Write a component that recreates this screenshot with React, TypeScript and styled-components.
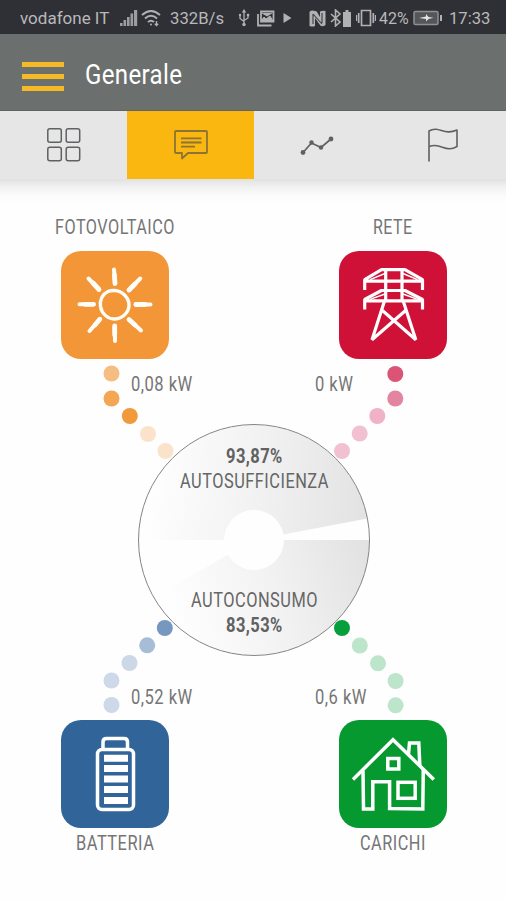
import React, { useLayoutEffect, useRef, useState } from "react";
import styled, { createGlobalStyle } from "styled-components";

const GlobalStyle = createGlobalStyle`
  * { box-sizing: border-box; }
  body { margin: 0; background: #fefefe; font-family: Roboto, "Liberation Sans", sans-serif; }
`;

const Screen = styled.div`
  width: 506px;
  height: 900px;
  display: flex;
  flex-direction: column;
  overflow: hidden;
  background: #fefefe;
`;

const FitBox = styled.span<{ $width: number; $size: number; $weight: number; $color: string; $spacing: number }>`
  display: block;
  flex: none;
  width: ${(p) => p.$width}px;
  font-size: ${(p) => p.$size}px;
  line-height: 24px;
  font-weight: ${(p) => p.$weight};
  letter-spacing: ${(p) => p.$spacing}px;
  color: ${(p) => p.$color};
  white-space: nowrap;
`;

const FitInner = styled.span`
  display: inline-block;
  vertical-align: top;
  transform-origin: 0 50%;
`;

type CondensedProps = {
  children: string;
  width: number;
  size?: number;
  weight?: number;
  color?: string;
  spacing?: number;
};

/* Condenses a line of text horizontally to the requested width. */
function Condensed({ children, width, size = 20, weight = 400, color = "#757575", spacing = 0 }: CondensedProps) {
  const ref = useRef<HTMLSpanElement>(null);
  const [scale, setScale] = useState(1);
  useLayoutEffect(() => {
    if (ref.current) setScale(width / ref.current.offsetWidth);
  }, [width, children]);
  return (
    <FitBox $width={width} $size={size} $weight={weight} $color={color} $spacing={spacing}>
      <FitInner ref={ref} style={{ transform: `scaleX(${scale})` }}>
        {children}
      </FitInner>
    </FitBox>
  );
}

const StatusBar = styled.header`
  height: 34px;
  flex: none;
  display: flex;
  align-items: center;
  padding: 2px 16px 0 20px;
  background: #2f3035;
`;

const StatusIcon = styled.svg<{ $before?: number }>`
  display: block;
  flex: none;
  margin-left: ${(p) => p.$before ?? 0}px;
  color: #b1b1b4;
`;

const Gap = styled.span<{ $w: number }>`
  flex: none;
  width: ${(p) => p.$w}px;
`;

const AppBar = styled.div`
  height: 77px;
  flex: none;
  display: flex;
  align-items: center;
  gap: 21px;
  padding: 5px 22px 0 22px;
  background: #6b706f;
  border-bottom: 1px solid #606463;
`;

const MenuButton = styled.button`
  width: 42px;
  height: 29px;
  margin-top: 3px;
  padding: 0;
  border: 0;
  background: none;
  display: flex;
  flex-direction: column;
  justify-content: space-between;
`;

const MenuLine = styled.span`
  height: 5px;
  width: 100%;
  background: #f4bb26;
`;

const Tabs = styled.nav`
  height: 68px;
  flex: none;
  display: grid;
  grid-template-columns: 127px 127px 126px 126px;
`;

const Tab = styled.button<{ $active?: boolean }>`
  border: 0;
  padding: 0;
  display: flex;
  align-items: center;
  justify-content: center;
  background: ${(p) => (p.$active ? "#f9b70f" : "#e6e6e6")};
  color: ${(p) => (p.$active ? "#8d7335" : "#5f6162")};
`;

const TabShadow = styled.div`
  height: 24px;
  flex: none;
  background: linear-gradient(#e1e1e1, #f2f2f2 35%, #fbfbfb 70%, #fefefe);
`;

const Flow = styled.main`
  position: relative;
  flex: 1;
  display: flex;
  flex-direction: column;
  padding-top: 12px;
`;

const Links = styled.svg`
  position: absolute;
  left: 0;
  top: -203px;
  pointer-events: none;
`;

const NodeRow = styled.div<{ $top?: number }>`
  display: flex;
  justify-content: space-between;
  margin-top: ${(p) => p.$top ?? 0}px;
  padding: 0 59px 0 60.5px;
`;

const Node = styled.section<{ $gap: number }>`
  width: 108px;
  display: flex;
  flex-direction: column;
  align-items: center;
  gap: ${(p) => p.$gap}px;
`;

const Tile = styled.div<{ $color: string }>`
  width: 108px;
  height: 108px;
  border-radius: 20px;
  background: ${(p) => p.$color};
`;

const Values = styled.div<{ $top: number }>`
  display: grid;
  grid-template-columns: 183.5px auto;
  padding-left: 131px;
  margin-top: ${(p) => p.$top}px;
`;

const Gauge = styled.section`
  position: relative;
  width: 232px;
  height: 232px;
  margin: 28px 0 0 138px;
  display: flex;
  flex-direction: column;
  align-items: center;
  justify-content: space-between;
  padding: 20px 0 19px;
`;

const GaugeDisc = styled.svg`
  position: absolute;
  inset: 0;
`;

const GaugeText = styled.div`
  position: relative;
  display: flex;
  flex-direction: column;
  align-items: center;
  gap: 1px;
`;

const grey = "#b9b9bb";

function StatusBarContent() {
  return (
    <StatusBar>
      <Condensed width={89} size={17} color={grey}>vodafone IT</Condensed>
      <StatusIcon $before={11} width="18" height="18" viewBox="0 0 18 18" fill="currentColor" opacity=".85">
        <path d="M0 14h2.6v3H0zM3.5 11h2.6v6H3.5zM7 8h2.6v9H7zM10.5 4.5h2.6V17h-2.6zM14 1h3.2v16H14z" />
      </StatusIcon>
      <StatusIcon $before={3} width="20" height="18" viewBox="0 0 20 18" fill="none" stroke="currentColor" strokeWidth="2">
        <path d="M1 6q9-8 18 0M4 9.5q6-5.5 12 0M7 13q3-2.6 6 0" />
        <circle cx="10" cy="15.5" r="1" fill="currentColor" stroke="none" />
        <path d="M15.5 12v4M13.8 14.7l1.7 1.8 1.7-1.8" strokeWidth="1.3" />
      </StatusIcon>
      <Gap $w={9} />
      <Condensed width={54} size={17} color={grey}>332B/s</Condensed>
      <StatusIcon $before={14} width="12" height="18" viewBox="0 0 12 18" fill="none" stroke="currentColor" strokeWidth="1.3">
        <path d="M6 3v12M2 6v3.5l4 3M10 6v3l-4 2.5" />
        <path d="M6 0l2.2 3.6H3.8z" fill="currentColor" stroke="none" />
        <circle cx="6" cy="15.5" r="1.7" fill="currentColor" stroke="none" />
        <circle cx="2" cy="6" r="1.2" fill="currentColor" stroke="none" />
        <path d="M8.8 4.8h2.4v2.4H8.8z" fill="currentColor" stroke="none" />
      </StatusIcon>
      <StatusIcon $before={7} width="18" height="17" viewBox="0 0 18 17" fill="none" stroke="currentColor" strokeWidth="1.8">
        <path d="M4 1.5h12.5v10H4zM1 4v11.5h13.5" />
        <path d="M4 11l3-4 2 2 4-3 3 5zM5 3l5 3 5-3" fill="currentColor" strokeWidth="1" />
      </StatusIcon>
      <StatusIcon $before={8} width="9" height="12" viewBox="0 0 9 12" fill="currentColor">
        <path d="M.5 1l8 5-8 5z" />
      </StatusIcon>
      <StatusIcon $before={17} width="17" height="17" viewBox="0 0 17 17">
        <path d="M3 .5q4 0 5 1.5l3 5V1.5Q14 .3 16.5 1v14q-2.5 2-5 .8L6 8v8q-2.5 1-5.5 0V2Q1 .5 3 .5z" fill="currentColor" />
        <path d="M4 4v10M4 4l9 10M13 13V3" stroke="#3b3c41" strokeWidth="1.1" fill="none" />
      </StatusIcon>
      <StatusIcon $before={4} width="12" height="18" viewBox="0 0 12 18" fill="none" stroke="currentColor" strokeWidth="1.6">
        <path d="M1 5l9 8-4.5 4V1L10 5l-9 8" />
      </StatusIcon>
      <StatusIcon $before={1} width="8" height="17" viewBox="0 0 8 17" fill="currentColor">
        <path d="M2.5 0h3v2H8v15H0V2h2.5z" />
      </StatusIcon>
      <StatusIcon $before={5} width="20" height="18" viewBox="0 0 20 18" fill="none" stroke="currentColor" strokeWidth="1.7">
        <path d="M5.5 1.5h9v15h-9zM2.7 4v10M17.3 4v10" />
        <path d="M.6 6v6M19.4 6v6" strokeWidth="1.2" />
      </StatusIcon>
      <Gap $w={3} />
      <Condensed width={30} size={17} color={grey}>42%</Condensed>
      <StatusIcon $before={4} width="30" height="16" viewBox="0 0 30 16">
        <rect x="1" y="1.5" width="24" height="13" rx="1.5" fill="#55565a" stroke="#8f9093" strokeWidth="1.5" />
        <path d="M28 5v6" stroke="currentColor" strokeWidth="2" />
        <path d="M6 8l7-1.5V4l2.5 3 5 .8-5 1.2-2.5 2.5V9z" fill="#e4e4e4" />
      </StatusIcon>
      <Gap $w={6} />
      <Condensed width={41} size={17} color={grey}>17:33</Condensed>
    </StatusBar>
  );
}

const GridIcon = () => (
  <svg width="34" height="34" viewBox="0 0 34 34" fill="none" stroke="currentColor" strokeWidth="1.5">
    <rect x=".8" y=".8" width="13.5" height="13.5" rx="2" />
    <rect x="19.2" y=".8" width="13.5" height="13.5" rx="2" />
    <rect x=".8" y="19.2" width="13.5" height="13.5" rx="2" />
    <rect x="19.2" y="19.2" width="13.5" height="13.5" rx="2" />
  </svg>
);

const ChatIcon = () => (
  <svg width="34" height="30" viewBox="0 0 34 30" fill="none" stroke="currentColor" strokeWidth="1.8" strokeLinejoin="round">
    <path d="M2 1h30q1 0 1 1v20q0 1-1 1H14l-6 5.5V23H2q-1 0-1-1V2q0-1 1-1z" />
    <path d="M7 8.3h20.5M7 12.5h20.5M7 16.7h14" />
  </svg>
);

const TrendIcon = () => (
  <svg width="34" height="21" viewBox="0 0 34 21" stroke="currentColor" fill="currentColor">
    <path d="M3 17.500L11.500 8l9.500 4.500L31 4" fill="none" strokeWidth="1.7" />
    <g stroke="none">
      <circle cx="3" cy="17.5" r="2.4" />
      <circle cx="11.5" cy="7.5" r="2.2" />
      <circle cx="21" cy="12.5" r="2.2" />
      <circle cx="31" cy="4" r="2.4" />
    </g>
  </svg>
);

const FlagIcon = () => (
  <svg width="32" height="34" viewBox="0 0 32 34" fill="none" stroke="currentColor" strokeWidth="1.6" strokeLinecap="round" strokeLinejoin="round">
    <path d="M2 33V3Q5 1 9 1.200C15 1.600 20 6.500 30 2V18.500C22 23.500 17 19 10 17.700Q6 17.200 2 18.500" />
  </svg>
);

const SunIcon = () => (
  <svg width="108" height="108" viewBox="0 0 108 108" fill="none" stroke="#fffdf8" strokeLinecap="round">
    <path d="M47 40.500C41.500 43 38.500 49 39.500 55.500S46.500 68.500 54 68 68 61.500 68 54 61 39.800 53.500 39.500Q50 39.300 47 40.500z" strokeWidth="3.4" />
    <path
      d="M53 18.500L54.200 32.500M27.500 27.500L38 38.500M79.300 27.500L68 39M18.500 53.300H32.500M74.800 53.500H89.500M38.800 68.200L28.500 80M68 68.500L80 79.500M53.700 75L54 90"
      strokeWidth="4"
    />
    <path d="M53.400 24L54 32.500M32 32L38 38.500M74 33L68 39M24 53.300H32.500M74.800 53.500H84M34 74L38.800 68.200M68 68.500L74 74M53.700 75V84" strokeWidth="4.8" />
  </svg>
);

const PylonIcon = () => (
  <svg width="108" height="108" viewBox="0 0 108 108" fill="none" stroke="#fff" strokeWidth="3.2" strokeLinejoin="bevel">
    <path d="M25.700 39V28.700L42.500 18.700H66L83.500 28.700V39M25.700 30.200H83.500M46.700 18.700V50M63 18.700V50" />
    <path d="M25.700 58.500V48.500L42.500 39.500H66L83.500 48.500V58.500M25.700 49.800H83.500" />
    <path d="M45.500 50L33 88.800L68 58.300M64.200 50L76.800 88.800L42 58.300" />
    <path d="M31 28.700L46 22.500M78.500 28.700L64 22.500M31 48.300L46 43M78.500 48.300L64 43" strokeWidth="1.4" />
  </svg>
);

const BatteryIcon = () => (
  <svg width="108" height="108" viewBox="0 0 108 108" fill="none" stroke="#fff" strokeWidth="3.5">
    <rect x="36.5" y="29.5" width="36" height="60" rx="4.5" />
    <path d="M42 28.500V22q0-3.500 3.500-3.500H63q3.500 0 3.500 3.500v6.500" />
    <path d="M43 38.300h24M43 48.500h24M43 59h24M43 69.500h24M43 80.500h24" strokeWidth="7" />
  </svg>
);

const HouseIcon = () => (
  <svg width="108" height="108" viewBox="0 0 108 108" fill="none" stroke="#fff" strokeWidth="3.5">
    <path d="M14 59.500L54 19.700L94.800 59.500" />
    <path d="M24 50.500L24.500 89H33.800V61.800H50.600V88.500L83.800 89L84.300 49" />
    <rect x="48.8" y="38.5" width="11" height="10.5" />
    <rect x="59" y="62.3" width="17.2" height="16" />
    <path d="M69.500 34L70.500 23H79.800L80.800 45" />
  </svg>
);

type Dot = [x: number, y: number, color: string];
const dots: Dot[] = [
  [111.5, 373.5, "#f6bd83"], [111.5, 398.5, "#f3a653"], [129.8, 416, "#f09a3c"], [148, 434, "#fbe3cb"], [165.5, 451, "#fbe3cb"],
  [395.3, 374, "#dc5475"], [395.3, 398.5, "#e385a1"], [377.3, 416, "#f0b2c6"], [359.7, 433.5, "#f2c1d1"], [342, 451, "#f2c1d1"],
  [164.8, 628, "#7698bf"], [147.2, 645.3, "#a7bcd6"], [129.5, 663, "#ccd8e6"], [111.5, 680.5, "#cdd8e8"], [111.5, 705, "#cdd8e8"],
  [342, 628, "#079f3c"], [359.8, 645.5, "#bce5cb"], [378, 663.3, "#bce5cb"], [395.6, 681, "#bce5cb"], [395.6, 705.3, "#bce5cb"],
];

export default function App() {
  return (
    <Screen>
      <GlobalStyle />
      <StatusBarContent />
      <AppBar>
        <MenuButton aria-label="Menu">
          <MenuLine />
          <MenuLine />
          <MenuLine />
        </MenuButton>
        <Condensed width={97} size={28} weight={400} color="#ffffff" spacing={0.4}>Generale</Condensed>
      </AppBar>
      <Tabs>
        <Tab aria-label="Panoramica"><GridIcon /></Tab>
        <Tab aria-label="Generale" $active><ChatIcon /></Tab>
        <Tab aria-label="Andamento"><TrendIcon /></Tab>
        <Tab aria-label="Eventi"><FlagIcon /></Tab>
      </Tabs>
      <TabShadow />
      <Flow>
        <Links width="506" height="900" viewBox="0 0 506 900">
          {dots.map(([x, y, color]) => (
            <circle key={`${x}-${y}`} cx={x} cy={y} r="8" fill={color} />
          ))}
        </Links>
        <NodeRow>
          <Node $gap={12}>
            <Condensed width={120} spacing={0.6}>FOTOVOLTAICO</Condensed>
            <Tile $color="#f39637"><SunIcon /></Tile>
          </Node>
          <Node $gap={12}>
            <Condensed width={40} spacing={0.6}>RETE</Condensed>
            <Tile $color="#d01137"><PylonIcon /></Tile>
          </Node>
        </NodeRow>
        <Values $top={13}>
          <Condensed width={62} spacing={0.6}>0,08 kW</Condensed>
          <Condensed width={38} spacing={0.6}>0 kW</Condensed>
        </Values>
        <Gauge>
          <GaugeDisc width="232" height="232" viewBox="0 0 232 232">
            <defs>
              <linearGradient id="upper" gradientUnits="userSpaceOnUse" x1="10" y1="90" x2="230" y2="116">
                <stop offset="0" stopColor="#fefefe" />
                <stop offset=".5" stopColor="#f1f1f1" />
                <stop offset="1" stopColor="#e2e2e2" />
              </linearGradient>
              <linearGradient id="lower" gradientUnits="userSpaceOnUse" x1="30" y1="170" x2="225" y2="110">
                <stop offset="0" stopColor="#fefefe" />
                <stop offset=".5" stopColor="#f2f2f2" />
                <stop offset="1" stopColor="#e2e2e2" />
              </linearGradient>
            </defs>
            <circle cx="116" cy="116" r="115.5" fill="#fefefe" />
            <path d="M116 116H.5A115.5 115.5 0 0 1 229.4 94.5z" fill="url(#upper)" />
            <path d="M116 116H231.5A115.5 115.5 0 0 1 15.6 173z" fill="url(#lower)" />
            <circle cx="116" cy="116" r="30" fill="#fefefe" />
            <circle cx="116" cy="116" r="115.5" fill="none" stroke="#858585" />
          </GaugeDisc>
          <GaugeText>
            <Condensed width={57} weight={700} color="#616161" spacing={0.5}>93,87%</Condensed>
            <Condensed width={149} color="#666" spacing={0.6}>AUTOSUFFICIENZA</Condensed>
          </GaugeText>
          <GaugeText>
            <Condensed width={127} color="#666" spacing={0.6}>AUTOCONSUMO</Condensed>
            <Condensed width={57} weight={700} color="#616161" spacing={0.5}>83,53%</Condensed>
          </GaugeText>
        </Gauge>
        <Values $top={29}>
          <Condensed width={62} spacing={0.6}>0,52 kW</Condensed>
          <Condensed width={52} spacing={0.6}>0,6 kW</Condensed>
        </Values>
        <NodeRow $top={11}>
          <Node $gap={3}>
            <Tile $color="#316599"><BatteryIcon /></Tile>
            <Condensed width={78} spacing={0.6}>BATTERIA</Condensed>
          </Node>
          <Node $gap={3}>
            <Tile $color="#06992f"><HouseIcon /></Tile>
            <Condensed width={66} spacing={0.6}>CARICHI</Condensed>
          </Node>
        </NodeRow>
      </Flow>
    </Screen>
  );
}
